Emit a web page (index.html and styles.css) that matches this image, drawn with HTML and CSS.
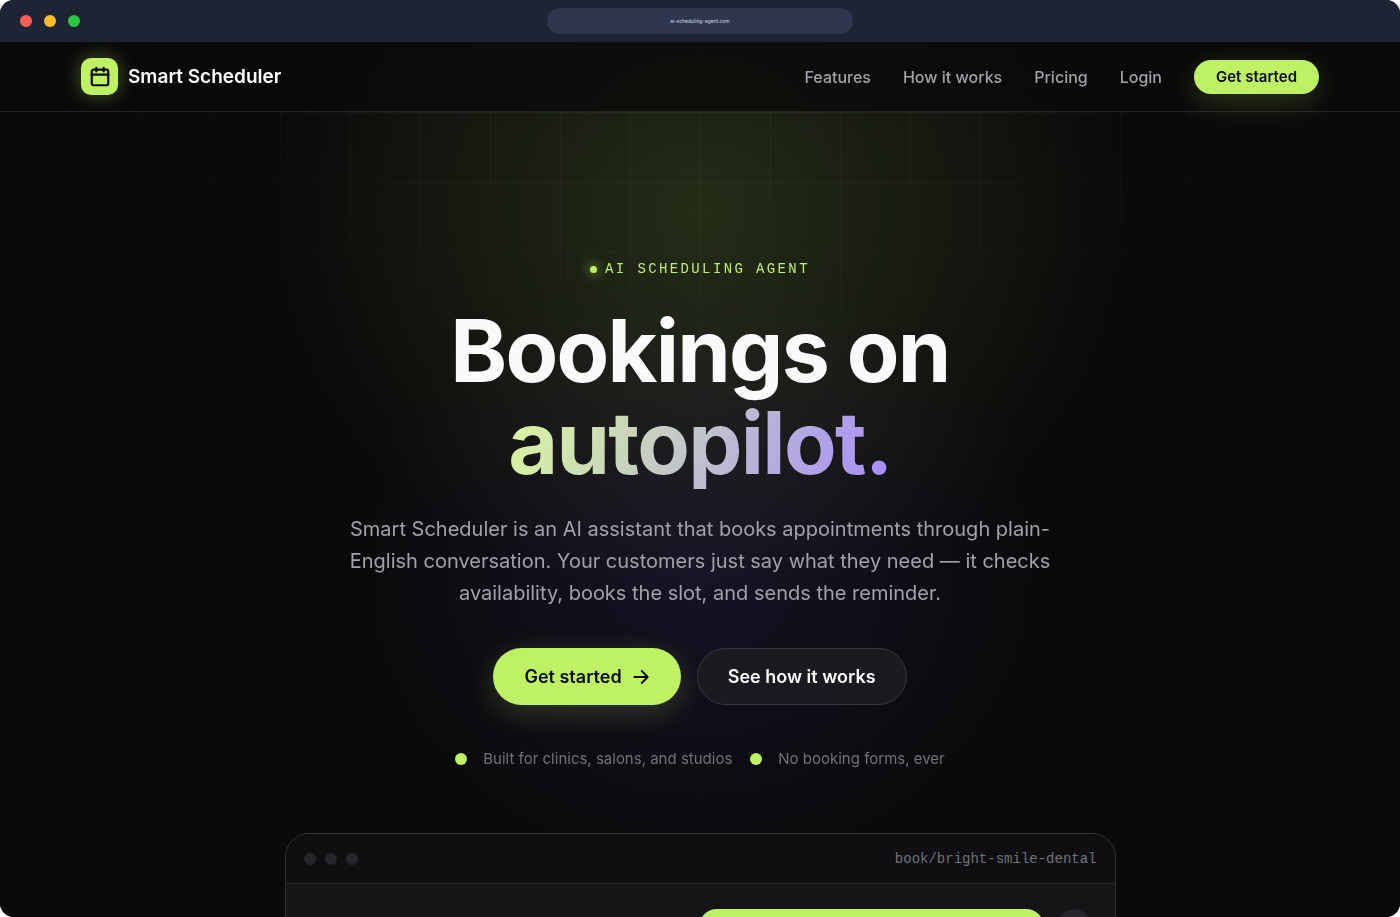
FILE: index.html
```
<!DOCTYPE html>
<html lang="en">
<head>
  <meta charset="UTF-8">
  <meta name="viewport" content="width=device-width, initial-scale=1.0">
  <title>Smart Scheduler - Bookings on autopilot</title>
  <link rel="stylesheet" href="styles.css">
</head>
<body>

  <div class="window">
    <div class="titlebar">
      <div class="lights">
        <span class="light red"></span>
        <span class="light yellow"></span>
        <span class="light green"></span>
      </div>
      <div class="address">ai-scheduling-agent.com</div>
    </div>

    <div class="page">
      <header class="header">
        <a href="#" class="brand">
          <span class="brand-icon">
            <svg width="22" height="22" viewBox="0 0 24 24" fill="none" stroke="currentColor" stroke-width="2.4" stroke-linecap="round" stroke-linejoin="round">
              <rect x="3" y="4" width="18" height="17" rx="2"></rect>
              <path d="M8 2v4M16 2v4M3 9.5h18"></path>
            </svg>
          </span>
          Smart Scheduler
        </a>
        <nav class="nav">
          <a href="#features">Features</a>
          <a href="#how">How it works</a>
          <a href="#pricing">Pricing</a>
          <a href="#login">Login</a>
          <button type="button" class="btn btn-small">Get started</button>
        </nav>
      </header>

      <main class="hero">
        <p class="eyebrow"><span class="eyebrow-dot"></span>AI SCHEDULING AGENT</p>
        <h1>Bookings on<br><span class="gradient-text">autopilot.</span></h1>
        <p class="lead">Smart Scheduler is an AI assistant that books appointments through plain-English conversation. Your customers just say what they need — it checks availability, books the slot, and sends the reminder.</p>

        <div class="actions">
          <button type="button" class="btn btn-large">
            Get started
            <svg width="18" height="18" viewBox="0 0 24 24" fill="none" stroke="currentColor" stroke-width="2.4" stroke-linecap="round" stroke-linejoin="round">
              <path d="M3 12h18M13 4l8 8-8 8"></path>
            </svg>
          </button>
          <button type="button" class="btn btn-large btn-ghost">See how it works</button>
        </div>

        <ul class="trust">
          <li>Built for clinics, salons, and studios</li>
          <li>No booking forms, ever</li>
        </ul>

        <section class="demo">
          <div class="demo-bar">
            <div class="demo-dots"><span></span><span></span><span></span></div>
            <span class="demo-url">book/bright-smile-dental</span>
          </div>
          <div class="demo-chat">
            <div class="bubble"></div>
            <div class="avatar"></div>
          </div>
        </section>
      </main>
    </div>
  </div>

</body>
</html>
```

FILE: styles.css
```
* {
  margin: 0;
  padding: 0;
  box-sizing: border-box;
}

:root {
  --lime: #bef264;
  --bg: #0a0a0a;
  --muted: #a1a1aa;
}

body {
  background: #fff;
  color: #fafafa;
  font-family: Inter, sans-serif;
}

.window {
  height: 100vh;
  display: flex;
  flex-direction: column;
  overflow: hidden;
  border-radius: 14px;
  background: var(--bg);
}

/* Browser bar */
.titlebar {
  flex: none;
  display: grid;
  grid-template-columns: 1fr 306px 1fr;
  align-items: center;
  height: 42px;
  padding: 0 20px;
  background: #1e2433;
}

.lights {
  display: flex;
  gap: 12px;
}

.light {
  width: 12px;
  height: 12px;
  border-radius: 50%;
}

.red { background: #ff5f57; }
.yellow { background: #febc2e; }
.green { background: #28c840; }

.address {
  height: 26px;
  border-radius: 13px;
  background: #2f374e;
  color: #d4d8e4;
  font-size: 5px;
  line-height: 26px;
  text-align: center;
}

/* Page background: glows */
.page {
  position: relative;
  flex: 1;
  min-height: 0;
  overflow: hidden;
  background:
    radial-gradient(430px 400px at 50% 170px, rgba(190, 242, 100, 0.15), transparent),
    radial-gradient(350px 310px at 50% 530px, rgba(110, 70, 235, 0.12), transparent),
    var(--bg);
}

/* Faint grid, fades towards the edges */
.page::before {
  content: "";
  position: absolute;
  inset: 0;
  background-image:
    linear-gradient(rgba(255, 255, 255, 0.035) 1px, transparent 1px),
    linear-gradient(90deg, rgba(255, 255, 255, 0.035) 1px, transparent 1px);
  background-size: 70px 70px;
  mask-image: radial-gradient(ellipse 60% 50% at 50% 0, #000 30%, transparent 100%);
}

.header {
  position: relative;
  display: flex;
  align-items: center;
  justify-content: space-between;
  height: 70px;
  padding: 0 81px;
  background: rgba(10, 10, 10, 0.75);
  backdrop-filter: blur(12px);
  border-bottom: 1px solid #222321;
}

.brand {
  display: flex;
  align-items: center;
  gap: 10px;
  color: #fafafa;
  font-size: 19px;
  font-weight: 600;
  text-decoration: none;
}

.brand-icon {
  display: flex;
  align-items: center;
  justify-content: center;
  width: 37px;
  height: 37px;
  border-radius: 10px;
  background: var(--lime);
  color: #0a0a0a;
  box-shadow: 0 0 20px rgba(190, 242, 100, 0.35);
}

.nav {
  display: flex;
  align-items: center;
  gap: 32px;
}

.nav a {
  color: var(--muted);
  font-size: 16px;
  font-weight: 500;
  text-decoration: none;
}

.btn {
  display: inline-flex;
  align-items: center;
  justify-content: center;
  border: 1px solid transparent;
  border-radius: 99px;
  background: var(--lime);
  color: #0a0a0a;
  font-family: inherit;
  font-weight: 600;
  white-space: nowrap;
  cursor: pointer;
  box-shadow: 0 8px 30px rgba(190, 242, 100, 0.2);
}

.btn-small {
  height: 34px;
  padding: 0 21px;
  font-size: 15px;
}

.btn-large {
  gap: 10px;
  height: 57px;
  padding: 0 30px;
  font-size: 18px;
}

.btn-ghost {
  background: #1a1a1f;
  border-color: #38383d;
  color: #fafafa;
  box-shadow: none;
}

/* Hero */
.hero {
  position: relative;
  display: flex;
  flex-direction: column;
  align-items: center;
  padding: 147px 24px 0;
  text-align: center;
}

.eyebrow {
  display: flex;
  align-items: center;
  gap: 8px;
  color: var(--lime);
  font-family: "Liberation Mono", monospace;
  font-size: 14px;
  line-height: 20px;
  letter-spacing: 0.17em;
}

.eyebrow-dot {
  width: 7px;
  height: 7px;
  border-radius: 50%;
  background: var(--lime);
  box-shadow: 0 0 12px var(--lime);
}

h1 {
  margin-top: 26px;
  font-size: 86px;
  font-weight: 700;
  line-height: 92px;
  letter-spacing: -0.02em;
}

.gradient-text {
  display: inline-block;
  background: linear-gradient(110deg, #d9f99d, #a78bfa);
  background-clip: text;
  color: transparent;
}

.lead {
  max-width: 730px;
  margin-top: 24px;
  color: var(--muted);
  font-size: 20px;
  line-height: 32px;
}

.actions {
  display: flex;
  gap: 16px;
  margin-top: 39px;
}

.trust {
  display: flex;
  gap: 18px;
  margin-top: 42px;
  color: #71717a;
  font-size: 15px;
  line-height: 24px;
  list-style: none;
}

.trust li {
  display: flex;
  align-items: center;
  gap: 16px;
}

.trust li::before {
  content: "";
  width: 12px;
  height: 12px;
  border-radius: 50%;
  background: var(--lime);
}

/* Chat preview */
.demo {
  width: 100%;
  max-width: 831px;
  margin-top: 62px;
  overflow: hidden;
  border: 1px solid #333336;
  border-radius: 24px;
  background: #151517;
}

.demo-bar {
  display: flex;
  align-items: center;
  justify-content: space-between;
  height: 50px;
  padding: 0 18px;
  background: #0f0f11;
  border-bottom: 1px solid #232325;
}

.demo-dots {
  display: flex;
  gap: 9px;
}

.demo-dots span {
  width: 12px;
  height: 12px;
  border-radius: 50%;
  background: #26262a;
}

.demo-url {
  color: #71717a;
  font-family: "Liberation Mono", monospace;
  font-size: 14px;
}

.demo-chat {
  display: flex;
  justify-content: flex-end;
  gap: 14px;
  height: 420px;
  padding: 25px;
}

.bubble {
  width: 345px;
  height: 64px;
  border-radius: 18px 18px 6px 18px;
  background: var(--lime);
}

.avatar {
  width: 32px;
  height: 32px;
  border-radius: 50%;
  background: #26262a;
}
```
